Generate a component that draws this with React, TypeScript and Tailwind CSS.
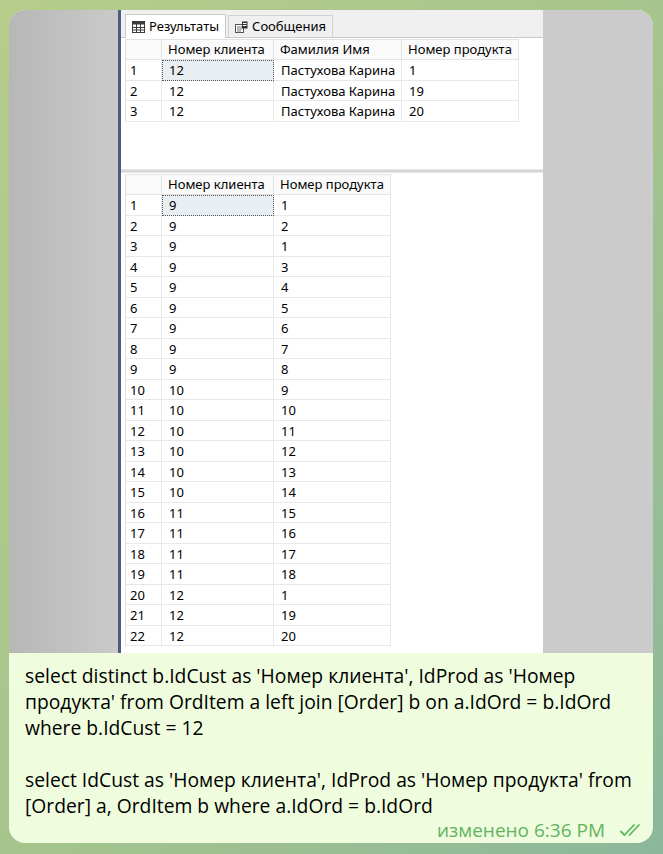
import React from 'react'

const grid1 = {
  cols: [
    { title: 'Номер клиента', w: 112 },
    { title: 'Фамилия Имя', w: 128 },
    { title: 'Номер продукта', w: 117 },
  ],
  rows: [
    ['12', 'Пастухова Карина', '1'],
    ['12', 'Пастухова Карина', '19'],
    ['12', 'Пастухова Карина', '20'],
  ],
}

const grid2Rows: [string, string][] = [
  ['9', '1'], ['9', '2'], ['9', '1'], ['9', '3'], ['9', '4'], ['9', '5'], ['9', '6'], ['9', '7'],
  ['9', '8'], ['10', '9'], ['10', '10'], ['10', '11'], ['10', '12'], ['10', '13'], ['10', '14'],
  ['11', '15'], ['11', '16'], ['11', '17'], ['11', '18'], ['12', '1'], ['12', '19'], ['12', '20'],
]

const grid2 = {
  cols: [
    { title: 'Номер клиента', w: 112 },
    { title: 'Номер продукта', w: 117 },
  ],
  rows: grid2Rows,
}

function ResultGrid({ cols, rows }: { cols: { title: string; w: number }[]; rows: string[][] }) {
  return (
    <div className="flex flex-col border-l border-t border-[#e3e3e3] w-fit">
      <div className="flex h-[20px]">
        <div className="w-[36px] border-r border-b border-[#e3e3e3] bg-[#fafafa]" />
        {cols.map((c) => (
          <div
            key={c.title}
            style={{ width: c.w }}
            className="border-r border-b border-[#e3e3e3] bg-[#fafafa] pl-[6px] leading-[19px] whitespace-nowrap"
          >
            {c.title}
          </div>
        ))}
      </div>
      {rows.map((r, i) => (
        <div key={i} className="flex h-[20.5px]">
          <div className="w-[36px] border-r border-b border-[#e8e8e8] pl-[4px] leading-[20px]">{i + 1}</div>
          {r.map((v, j) => (
            <div
              key={j}
              style={{ width: cols[j].w }}
              className={
                i === 0 && j === 0
                  ? 'border border-dotted border-[#555] bg-[#e9eef3] pl-[6px] leading-[18px] whitespace-nowrap'
                  : 'border-r border-b border-[#e8e8e8] pl-[7px] leading-[20px] whitespace-nowrap'
              }
            >
              {v}
            </div>
          ))}
        </div>
      ))}
    </div>
  )
}

function GridIcon() {
  return (
    <svg width="13" height="12" viewBox="0 0 13 12" className="shrink-0">
      <rect x="0.5" y="0.5" width="12" height="11" fill="#fff" stroke="#3c3c3c" />
      <rect x="0.5" y="0.5" width="12" height="3" fill="#3c3c3c" />
      <path d="M4.5 0.5V11.5M8.5 0.5V11.5M0.5 6.5H12.5M0.5 9H12.5" stroke="#3c3c3c" strokeWidth="1" />
    </svg>
  )
}

function MsgIcon() {
  return (
    <svg width="13" height="12" viewBox="0 0 13 12" className="shrink-0">
      <rect x="0.5" y="3.5" width="8" height="8" fill="#fff" stroke="#555" />
      <path d="M2 6H7M2 8H7M2 10H6" stroke="#777" />
      <rect x="7" y="0.5" width="5.5" height="7" fill="#333" />
      <path d="M8 2.5H11.5M8 4.5H11.5" stroke="#fff" />
    </svg>
  )
}

function SsmsPanel() {
  return (
    <div className="w-[425px] h-full flex flex-col border-l-[3px] border-[#4d5c7c] bg-white text-[13px] text-black" style={{ fontFamily: '"Noto Sans", "Open Sans", sans-serif' }}>
      <div className="h-[28px] bg-[#f0f0f0] border-b border-[#c9c9c9] flex items-end pl-[4px] gap-[2px]">
        <div className="h-[24px] bg-white border border-b-0 border-[#c9c9c9] flex items-center gap-[4px] px-[6px] -mb-px">
          <GridIcon />
          <span>Результаты</span>
        </div>
        <div className="h-[22px] bg-[#f0f0f0] border border-b-0 border-[#d2d2d2] flex items-center gap-[4px] px-[6px]">
          <MsgIcon />
          <span>Сообщения</span>
        </div>
      </div>
      <div className="pl-[4px] pt-[1px] h-[131px]">
        <ResultGrid cols={grid1.cols} rows={grid1.rows} />
      </div>
      <div className="h-[4px] bg-[#d6d6d6] border-y border-[#e6e6e6]" />
      <div className="pl-[4px] pt-[1px] flex-1">
        <ResultGrid cols={grid2.cols} rows={grid2.rows} />
      </div>
    </div>
  )
}

function DoubleCheck() {
  return (
    <svg width="26" height="14" viewBox="0 0 26 14" fill="none">
      <path d="M2 8.5L5.5 12L15 2" stroke="#5cb85c" strokeWidth="1.8" strokeLinecap="round" strokeLinejoin="round" />
      <path d="M10.5 12L20 2" stroke="#5cb85c" strokeWidth="1.8" strokeLinecap="round" />
    </svg>
  )
}

export default function App() {
  return (
    <div className="w-[663px] h-[854px] overflow-hidden bg-gradient-to-br from-[#b6cd8b] via-[#a6c58c] to-[#8cb79a] pl-[9px] pt-[10px]">
      <div className="w-[644px] rounded-[16px] overflow-hidden bg-[#effdde]">
        <div className="h-[643px] flex">
          <div className="w-[109px] h-full bg-gradient-to-r from-[#b7b7b7] to-[#cacaca]" />
          <SsmsPanel />
          <div className="w-[110px] h-full bg-[#cbcbcb]" />
        </div>
        <div
          className="pl-[16px] pr-[8px] pt-[10px] pb-[2px] text-[19.3px] leading-[26px] text-black"
          style={{ fontFamily: '"Open Sans", "Noto Sans", sans-serif' }}
        >
          <div className="whitespace-nowrap">select distinct b.IdCust as 'Номер клиента', IdProd as 'Номер</div>
          <div className="whitespace-nowrap">продукта' from OrdItem a left join [Order] b on a.IdOrd = b.IdOrd</div>
          <div className="whitespace-nowrap">where b.IdCust = 12</div>
          <div className="h-[26px]" />
          <div className="whitespace-nowrap">select IdCust as 'Номер клиента', IdProd as 'Номер продукта' from</div>
          <div className="whitespace-nowrap">[Order] a, OrdItem b where a.IdOrd = b.IdOrd</div>
          <div className="flex justify-end items-center gap-[14px] h-[22px]">
            <span className="text-[19px] text-[#62b35f]">изменено 6:36 PM</span>
            <DoubleCheck />
          </div>
        </div>
      </div>
    </div>
  )
}
